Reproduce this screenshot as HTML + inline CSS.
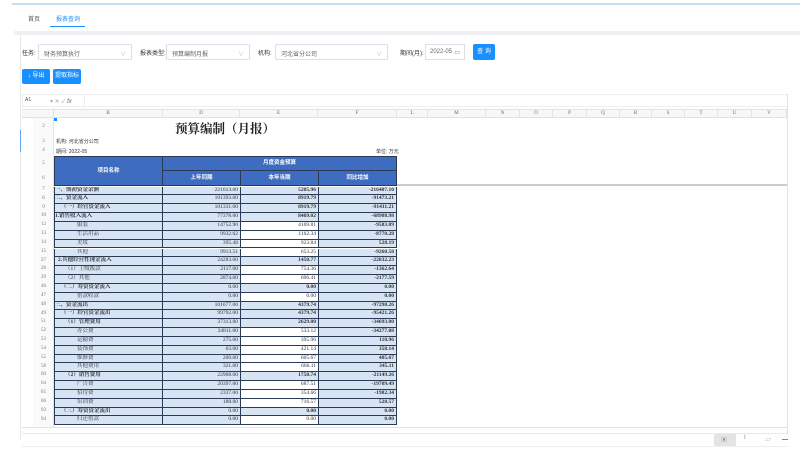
<!DOCTYPE html>
<html><head><meta charset="utf-8"><style>
*{margin:0;padding:0;box-sizing:border-box}
body{width:800px;height:459px;background:#fff;position:relative;overflow:hidden;font-family:"Liberation Sans","Noto Sans CJK SC",sans-serif;color:#333}
.a{position:absolute}
.t{font-size:6px;white-space:nowrap}
.sel{position:absolute;height:16px;border:1px solid #dcdfe6;border-radius:2px;font-size:6px;color:#666;padding:4px 5px;background:#fff}
.sel:after{content:"∨";position:absolute;right:5px;top:4px;color:#bbb;font-size:6px}
.btn{position:absolute;background:#1890ff;color:#fff;font-size:6px;border-radius:2px;text-align:center}
.ch{position:absolute;top:110px;height:8px;border-right:1px solid #e3e3e3;font-size:5px;color:#666;text-align:center;line-height:8px;font-family:"Liberation Serif",serif}
.rn{position:absolute;left:33px;width:21px;font-size:5px;color:#777;text-align:center;font-family:"Liberation Serif",serif}
.c{position:absolute;height:8.83px;border:1px solid #2b3a55;border-top:none;font-size:5.5px;line-height:7.5px;background:#d6e4f4;white-space:nowrap;overflow:hidden;font-family:"Liberation Serif","Noto Serif CJK SC",serif}
.r{text-align:right;padding-right:2px}
.w{background:#fff}
.b{font-weight:bold}
.hd{position:absolute;background:#3e6cc0;border:1px solid #2b3a55;color:#fff;font-size:5.5px;font-weight:bold;text-align:center}
</style></head><body>
<div class="a" style="left:12px;top:3px;width:788px;height:2px;background:#c5ddf5"></div>
<div class="a t" style="left:28px;top:14px;color:#555">首页</div>
<div class="a t" style="left:56px;top:14px;color:#1890ff">报表查询</div>
<div class="a" style="left:50px;top:26px;width:35px;height:1px;background:#1890ff"></div>
<div class="a" style="left:14px;top:31px;width:786px;height:4px;background:#eef0f3"></div>
<div class="a" style="left:20px;top:35px;width:1px;height:405px;background:#e6e8eb"></div>
<div class="a" style="left:20px;top:130px;width:1px;height:22px;background:#60a8f0"></div>

<div class="a t" style="left:22px;top:48px">任务:</div>
<div class="sel" style="left:38px;top:44px;width:94px">财务预算执行</div>
<div class="a t" style="left:140px;top:48px">报表类型:</div>
<div class="sel" style="left:166px;top:44px;width:84px">预算编制月报</div>
<div class="a t" style="left:258px;top:48px">机构:</div>
<div class="sel" style="left:275px;top:44px;width:113px">河北省分公司</div>
<div class="a t" style="left:400px;top:48px">期间(月):</div>
<div class="a" style="left:425px;top:44px;width:40px;height:16px;border:1px solid #dcdfe6;font-size:6px;color:#666;padding:4px 4px">2022-05 <span style="float:right">▭</span></div>
<div class="btn" style="left:473px;top:44px;width:22px;height:16px;line-height:16px">查 询</div>
<div class="btn" style="left:22px;top:69px;width:28px;height:15px;line-height:15px">↓ 导出</div>
<div class="btn" style="left:53px;top:69px;width:28px;height:15px;line-height:15px">提取指标</div>

<div class="a" style="left:22px;top:94px;width:766px;height:13px;border:1px solid #eee"></div>
<div class="a t" style="left:25px;top:97px;color:#555;font-size:5px">A1</div>
<div class="a t" style="left:50px;top:96px;color:#aaa">▾ ✕ ✓ <i style="color:#666">fx</i></div>
<div class="a" style="left:84px;top:94px;width:1px;height:13px;background:#eee"></div>

<div class="a" style="left:22px;top:109px;width:766px;height:9px;background:#f7f7f7;border-top:1px solid #e3e3e3;border-bottom:1px solid #e3e3e3"></div>
<div class="ch" style="left:33px;width:21px"></div>
<div class="ch" style="left:54px;width:109px">B</div>
<div class="ch" style="left:163px;width:77px">D</div>
<div class="ch" style="left:240px;width:78px">E</div>
<div class="ch" style="left:318px;width:79px">F</div>
<div class="ch" style="left:397px;width:31px">L</div>
<div class="ch" style="left:428px;width:58px">M</div>
<div class="ch" style="left:486px;width:34px">N</div>
<div class="ch" style="left:520px;width:33px">O</div>
<div class="ch" style="left:553px;width:34px">P</div>
<div class="ch" style="left:587px;width:33px">Q</div>
<div class="ch" style="left:620px;width:32px">R</div>
<div class="ch" style="left:652px;width:33px">S</div>
<div class="ch" style="left:685px;width:33px">T</div>
<div class="ch" style="left:718px;width:34px">U</div>
<div class="ch" style="left:752px;width:35px">V</div>
<div class="a" style="left:33px;top:118px;width:21px;height:310px;background:#fafafa;border-right:1px solid #e3e3e3"></div>
<div class="a" style="left:54px;top:118px;width:3px;height:3px;background:#1890ff"></div>

<div class="rn" style="top:124px">2</div>
<div class="rn" style="top:139px">3</div>
<div class="rn" style="top:148px">4</div>
<div class="rn" style="top:161px">5</div>
<div class="rn" style="top:176px">6</div>
<div class="a" style="left:150px;top:119px;width:150px;text-align:center;font-size:12.5px;font-weight:bold;font-family:'Liberation Serif','Noto Serif CJK SC',serif;color:#222">预算编制（月报）</div>
<div class="a t" style="left:56px;top:138px;font-size:5px">机构: 河北省分公司</div>
<div class="a t" style="left:56px;top:148px;font-size:5px">期间: 2022-05</div>
<div class="a t" style="left:376px;top:148px;font-size:5px">单位: 万元</div>

<div class="hd" style="left:54px;top:156px;width:109px;height:30px;line-height:28px">项目名称</div>
<div class="hd" style="left:162px;top:156px;width:235px;height:15px;line-height:13px">月度资金预算</div>
<div class="hd" style="left:162px;top:170px;width:79px;height:16px;line-height:14px">上年同期</div>
<div class="hd" style="left:240px;top:170px;width:79px;height:16px;line-height:14px">本年当期</div>
<div class="hd" style="left:318px;top:170px;width:79px;height:16px;line-height:14px">同比增加</div>
<div class="a" style="left:397px;top:184px;width:391px;height:2px;border-top:1px solid #ccc;border-bottom:1px solid #ccc"></div>

<div id="rows"></div>
<div class="a" style="left:22px;top:427px;width:766px;height:1px;background:#e3e3e3"></div>
<div class="a" style="left:22px;top:433px;width:766px;height:1px;background:#e8e8e8"></div>
<div class="a" style="left:22px;top:446px;width:766px;height:1px;background:#eee"></div>
<div class="a" style="left:787px;top:94px;width:1px;height:340px;background:#e3e3e3"></div>
<div class="a" style="left:714px;top:434px;width:22px;height:12px;background:#e4e4e4"></div>
<div class="a t" style="left:721px;top:435px;color:#888">▣</div>
<div class="a t" style="left:744px;top:435px;color:#888">I</div>
<div class="a t" style="left:765px;top:435px;color:#999">▱</div>
<div class="a" style="left:782px;top:439px;width:6px;height:1px;background:#888"></div>

<div class="a" style="left:0;top:0">
<!-- rows: y = 186.6 + i*8.83 -->
</div>
<div style="position:absolute;left:0;top:0">
<div class="rn" style="top:187px">7</div><div class="c b" style="left:54px;top:186.6px;width:109px">一、期初资金余额</div><div class="c r" style="left:162px;top:186.6px;width:79px">221613.00</div><div class="c r b" style="left:240px;top:186.6px;width:79px">5205.96</div><div class="c r b" style="left:318px;top:186.6px;width:79px">-216407.10</div>
<div class="rn" style="top:196px">8</div><div class="c b" style="left:54px;top:195.4px;width:109px">二、资金流入</div><div class="c r" style="left:162px;top:195.4px;width:79px">101393.00</div><div class="c r b" style="left:240px;top:195.4px;width:79px">8919.79</div><div class="c r b" style="left:318px;top:195.4px;width:79px">-91473.21</div>
<div class="rn" style="top:205px">9</div><div class="c b" style="left:54px;top:204.3px;width:109px;padding-left:6px">（一）经营资金流入</div><div class="c r" style="left:162px;top:204.3px;width:79px">101331.00</div><div class="c r b" style="left:240px;top:204.3px;width:79px">8919.79</div><div class="c r b" style="left:318px;top:204.3px;width:79px">-91411.21</div>
<div class="rn" style="top:213px">10</div><div class="c b" style="left:54px;top:213.1px;width:109px">1.销售收入流入</div><div class="c r" style="left:162px;top:213.1px;width:79px">77378.00</div><div class="c r b" style="left:240px;top:213.1px;width:79px">8469.02</div><div class="c r b" style="left:318px;top:213.1px;width:79px">-68908.98</div>
<div class="rn" style="top:222px">12</div><div class="c" style="left:54px;top:222px;width:109px;padding-left:22px">服装</div><div class="c r" style="left:162px;top:222px;width:79px">14752.90</div><div class="c r w" style="left:240px;top:222px;width:79px">4169.81</div><div class="c r b" style="left:318px;top:222px;width:79px">-9583.09</div>
<div class="rn" style="top:231px">13</div><div class="c" style="left:54px;top:230.8px;width:109px;padding-left:22px">生活用品</div><div class="c r" style="left:162px;top:230.8px;width:79px">9932.62</div><div class="c r w" style="left:240px;top:230.8px;width:79px">1162.34</div><div class="c r b" style="left:318px;top:230.8px;width:79px">-8770.28</div>
<div class="rn" style="top:240px">14</div><div class="c" style="left:54px;top:239.6px;width:109px;padding-left:22px">美妆</div><div class="c r" style="left:162px;top:239.6px;width:79px">395.48</div><div class="c r w" style="left:240px;top:239.6px;width:79px">923.84</div><div class="c r b" style="left:318px;top:239.6px;width:79px">528.19</div>
<div class="rn" style="top:249px">15</div><div class="c" style="left:54px;top:248.5px;width:109px;padding-left:22px">其他</div><div class="c r" style="left:162px;top:248.5px;width:79px">9913.51</div><div class="c r w" style="left:240px;top:248.5px;width:79px">653.25</div><div class="c r b" style="left:318px;top:248.5px;width:79px">-9260.58</div>
<div class="rn" style="top:258px">27</div><div class="c b" style="left:54px;top:257.3px;width:109px;padding-left:3px">2.其他经营性现金流入</div><div class="c r" style="left:162px;top:257.3px;width:79px">24283.00</div><div class="c r b" style="left:240px;top:257.3px;width:79px">1450.77</div><div class="c r b" style="left:318px;top:257.3px;width:79px">-22832.23</div>
<div class="rn" style="top:266px">28</div><div class="c" style="left:54px;top:266.2px;width:109px;padding-left:10px">（1）上级拨款</div><div class="c r" style="left:162px;top:266.2px;width:79px">2117.00</div><div class="c r w" style="left:240px;top:266.2px;width:79px">754.36</div><div class="c r b" style="left:318px;top:266.2px;width:79px">-1362.64</div>
<div class="rn" style="top:275px">29</div><div class="c" style="left:54px;top:275px;width:109px;padding-left:10px">（2）其他</div><div class="c r" style="left:162px;top:275px;width:79px">2874.00</div><div class="c r w" style="left:240px;top:275px;width:79px">696.41</div><div class="c r b" style="left:318px;top:275px;width:79px">-2177.59</div>
<div class="rn" style="top:284px">46</div><div class="c b" style="left:54px;top:283.9px;width:109px;padding-left:6px">（二）筹资资金流入</div><div class="c r" style="left:162px;top:283.9px;width:79px">0.00</div><div class="c r b" style="left:240px;top:283.9px;width:79px">0.00</div><div class="c r b" style="left:318px;top:283.9px;width:79px">0.00</div>
<div class="rn" style="top:293px">47</div><div class="c" style="left:54px;top:292.7px;width:109px;padding-left:22px">借款收款</div><div class="c r" style="left:162px;top:292.7px;width:79px">0.00</div><div class="c r w" style="left:240px;top:292.7px;width:79px">0.00</div><div class="c r b" style="left:318px;top:292.7px;width:79px">0.00</div>
<div class="rn" style="top:302px">48</div><div class="c b" style="left:54px;top:301.5px;width:109px">三、资金流出</div><div class="c r" style="left:162px;top:301.5px;width:79px">101677.00</div><div class="c r b" style="left:240px;top:301.5px;width:79px">4379.74</div><div class="c r b" style="left:318px;top:301.5px;width:79px">-97298.26</div>
<div class="rn" style="top:311px">49</div><div class="c b" style="left:54px;top:310.4px;width:109px;padding-left:6px">（一）经营资金流出</div><div class="c r" style="left:162px;top:310.4px;width:79px">99792.00</div><div class="c r b" style="left:240px;top:310.4px;width:79px">4379.74</div><div class="c r b" style="left:318px;top:310.4px;width:79px">-95421.26</div>
<div class="rn" style="top:319px">51</div><div class="c b" style="left:54px;top:319.2px;width:109px;padding-left:10px">（1）管理费用</div><div class="c r" style="left:162px;top:319.2px;width:79px">37313.00</div><div class="c r b" style="left:240px;top:319.2px;width:79px">2629.00</div><div class="c r b" style="left:318px;top:319.2px;width:79px">-34693.00</div>
<div class="rn" style="top:328px">52</div><div class="c" style="left:54px;top:328.1px;width:109px;padding-left:22px">办公费</div><div class="c r" style="left:162px;top:328.1px;width:79px">34811.00</div><div class="c r w" style="left:240px;top:328.1px;width:79px">533.12</div><div class="c r b" style="left:318px;top:328.1px;width:79px">-34277.88</div>
<div class="rn" style="top:337px">53</div><div class="c" style="left:54px;top:336.9px;width:109px;padding-left:22px">运输费</div><div class="c r" style="left:162px;top:336.9px;width:79px">275.00</div><div class="c r w" style="left:240px;top:336.9px;width:79px">395.96</div><div class="c r b" style="left:318px;top:336.9px;width:79px">110.96</div>
<div class="rn" style="top:346px">54</div><div class="c" style="left:54px;top:345.7px;width:109px;padding-left:22px">装饰费</div><div class="c r" style="left:162px;top:345.7px;width:79px">63.00</div><div class="c r w" style="left:240px;top:345.7px;width:79px">421.14</div><div class="c r b" style="left:318px;top:345.7px;width:79px">358.14</div>
<div class="rn" style="top:355px">55</div><div class="c" style="left:54px;top:354.6px;width:109px;padding-left:22px">维修费</div><div class="c r" style="left:162px;top:354.6px;width:79px">200.00</div><div class="c r w" style="left:240px;top:354.6px;width:79px">605.67</div><div class="c r b" style="left:318px;top:354.6px;width:79px">405.67</div>
<div class="rn" style="top:364px">58</div><div class="c" style="left:54px;top:363.4px;width:109px;padding-left:22px">其他费用</div><div class="c r" style="left:162px;top:363.4px;width:79px">321.00</div><div class="c r w" style="left:240px;top:363.4px;width:79px">666.11</div><div class="c r b" style="left:318px;top:363.4px;width:79px">345.11</div>
<div class="rn" style="top:372px">60</div><div class="c b" style="left:54px;top:372.2px;width:109px;padding-left:10px">（2）销售费用</div><div class="c r" style="left:162px;top:372.2px;width:79px">22908.00</div><div class="c r b" style="left:240px;top:372.2px;width:79px">1758.74</div><div class="c r b" style="left:318px;top:372.2px;width:79px">-21149.26</div>
<div class="rn" style="top:381px">64</div><div class="c" style="left:54px;top:381.1px;width:109px;padding-left:22px">广告费</div><div class="c r" style="left:162px;top:381.1px;width:79px">20397.00</div><div class="c r w" style="left:240px;top:381.1px;width:79px">687.51</div><div class="c r b" style="left:318px;top:381.1px;width:79px">-19709.49</div>
<div class="rn" style="top:390px">65</div><div class="c" style="left:54px;top:389.9px;width:109px;padding-left:22px">招待费</div><div class="c r" style="left:162px;top:389.9px;width:79px">2337.00</div><div class="c r w" style="left:240px;top:389.9px;width:79px">354.66</div><div class="c r b" style="left:318px;top:389.9px;width:79px">-1982.34</div>
<div class="rn" style="top:399px">66</div><div class="c" style="left:54px;top:398.8px;width:109px;padding-left:22px">培训费</div><div class="c r" style="left:162px;top:398.8px;width:79px">188.00</div><div class="c r w" style="left:240px;top:398.8px;width:79px">716.57</div><div class="c r b" style="left:318px;top:398.8px;width:79px">528.57</div>
<div class="rn" style="top:408px">93</div><div class="c b" style="left:54px;top:407.6px;width:109px;padding-left:6px">（三）筹资资金流出</div><div class="c r" style="left:162px;top:407.6px;width:79px">0.00</div><div class="c r b" style="left:240px;top:407.6px;width:79px">0.00</div><div class="c r b" style="left:318px;top:407.6px;width:79px">0.00</div>
<div class="rn" style="top:417px">94</div><div class="c" style="left:54px;top:416.4px;width:109px;padding-left:22px">归还借款</div><div class="c r" style="left:162px;top:416.4px;width:79px">0.00</div><div class="c r w" style="left:240px;top:416.4px;width:79px">0.00</div><div class="c r b" style="left:318px;top:416.4px;width:79px">0.00</div>
</div>
</body></html>
